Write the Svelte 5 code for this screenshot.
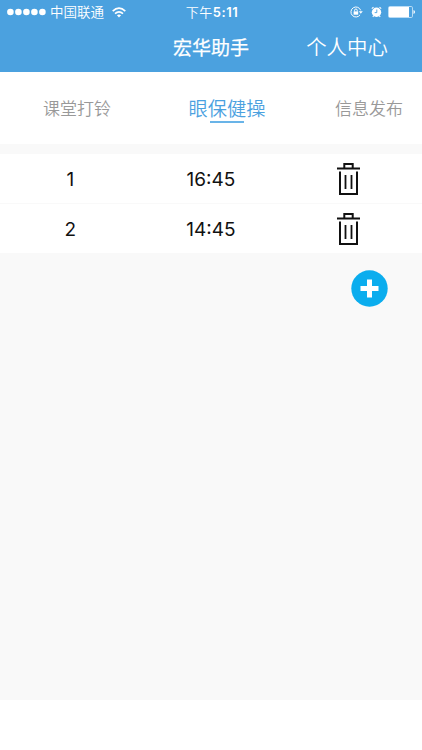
<script>
  const rows = [
    { id: 1, time: '16:45' },
    { id: 2, time: '14:45' },
  ];
</script>

<div class="screen">
  <header>
    <div class="status">
      <div class="left">
        <svg width="39" height="8" viewBox="0 0 39 8" fill="#fff">
          {#each [0, 1, 2, 3, 4] as i}
            <circle cx={3.4 + i * 8} cy="4" r="3.3" />
          {/each}
        </svg>
        <span class="carrier">中国联通</span>
        <svg class="wifi" width="14" height="11" viewBox="0 0 14 11" fill="none" stroke="#fff" stroke-width="1.7">
          <path d="M.7 4.1Q7-1.7 13.3 4.1M3 6.6q4-3.5 8 0" />
          <path d="M7 10.4 4.9 8.3q2.1-1.6 4.2 0z" fill="#fff" stroke="none" />
        </svg>
      </div>
      <span class="clock">下午<b>5:11</b></span>
      <div class="right">
        <svg width="13" height="12" viewBox="0 0 13 12" fill="none" stroke="#fff">
          <path d="M10.1 8.8A5 5 0 1 1 10.7 4.4" />
          <path d="M8.8 5.2h4L10.8 7.8z" fill="#fff" stroke="none" />
          <path d="M3.6 5.4h4.6v3.3H3.6z" fill="#fff" stroke="none" />
          <path d="M4.6 5.6V4.3a1.3 1.3 0 0 1 2.6 0v1.3" />
        </svg>
        <svg class="alarm" width="11" height="12" viewBox="0 0 11 12">
          <circle cx="5.5" cy="6.2" r="4.7" fill="#fff" />
          <path d="M.8 2.7 2.5 1.1M10.2 2.7 8.5 1.1M2.6 9.9l-.8 1M8.4 9.9l.8 1" stroke="#fff" stroke-width="1.1" />
          <path d="M5.8 3.5v3.1H3.7" fill="none" stroke="#4ba1df" stroke-width=".9" />
        </svg>
        <svg class="battery" width="27" height="12" viewBox="0 0 27 12">
          <rect x=".5" y=".5" width="24" height="11" rx="1.3" fill="none" stroke="#b9dcf5" />
          <path d="M1 1h20v10H1z" fill="#fff" />
          <path d="M25.5 4q1.5.3 1.5 2t-1.5 2z" fill="#fff" />
        </svg>
      </div>
    </div>
    <div class="bar">
      <span></span>
      <h1>宏华助手</h1>
      <span class="profile">个人中心</span>
    </div>
  </header>

  <nav>
    <span class="tab first">课堂打铃</span>
    <span class="tab active">眼保健操</span>
    <span class="tab last">信息发布</span>
  </nav>

  <main>
    {#each rows as row}
      <div class="row">
        <span>{row.id}</span>
        <span>{row.time}</span>
        <span class="delete">
          <svg width="23" height="34" viewBox="0 0 23 34" fill="none" stroke="#111" stroke-width="2">
            <path d="M0 6.5h23M7.3 6V2h8.4v4" />
            <path d="M3 9.5V32h17V9.500" />
            <path d="M8.500 13v14M14.500 13v14" stroke-width="1.8" />
          </svg>
        </span>
      </div>
    {/each}
    <div class="add">
      <svg width="37" height="37" viewBox="0 0 37 37">
        <circle cx="18.5" cy="18.5" r="18.2" fill="#0badee" />
        <path d="M18.500 9.500v18M9.500 18.500h18" stroke="#fff" stroke-width="5" />
      </svg>
    </div>
  </main>
</div>

<style>
  .screen {
    display: flex;
    flex-direction: column;
    width: 422px;
    height: 750px;
    background: #fff;
    font-family: Inter, 'Noto Sans CJK SC', sans-serif;
  }
  svg { display: block; flex: none; }
  header {
    height: 72px;
    background: #4ba1df;
    color: #fff;
  }
  .status {
    display: grid;
    grid-template-columns: 1fr auto 1fr;
    align-items: center;
    height: 24px;
    padding: 0 7px;
    font-size: 13.5px;
    line-height: 24px;
  }
  .left, .right { display: flex; align-items: center; }
  .right { justify-content: flex-end; }
  .carrier { margin-left: 4px; font-weight: 350; }
  .wifi { margin-left: 8px; }
  .clock { padding-left: 2px; font-size: 13px; font-weight: 350; letter-spacing: .5px; }
  .clock b { font-weight: 600; }
  .alarm { margin-left: 8px; }
  .battery { margin-left: 6px; }
  .bar {
    display: grid;
    grid-template-columns: 150px 122px 150px;
    align-items: center;
    height: 47px;
    text-align: center;
  }
  h1 {
    margin: 0;
    padding-top: 2px;
    font-size: 19px;
    font-weight: 400;
    line-height: 28px;
    -webkit-text-stroke: .25px #fff;
  }
  .profile { font-size: 20.4px; font-weight: 350; line-height: 28px; }
  nav {
    display: flex;
    justify-content: space-between;
    align-items: center;
    height: 72px;
    padding: 2px 19px 0 43px;
    box-sizing: border-box;
    color: #999;
  }
  .tab { font-size: 17px; font-weight: 350; line-height: 26px; }
  .active {
    display: flex;
    flex-direction: column;
    align-items: center;
    margin-left: 8px;
    color: #4ba1df;
    font-size: 19.3px;
  }
  .active::after {
    width: 34px;
    height: 2px;
    margin: -1px 0;
    background: #69b4e8;
    content: '';
  }
  main {
    height: 546px;
    padding-top: 10px;
    background: #f9f9f9;
  }
  .row {
    display: grid;
    grid-template-columns: repeat(3, 1fr);
    align-items: center;
    height: 49px;
    background: #fff;
    color: #111;
    font-size: 19px;
    line-height: 47px;
    text-align: center;
  }
  .row > span:not(.delete) { padding-top: 2px; }
  .row + .row { border-top: 1px solid #f9f9f9; }
  .delete { display: flex; justify-content: center; padding-right: 7px; }
  .add { display: flex; justify-content: flex-end; padding: 17px 34px 0 0; }
</style>
